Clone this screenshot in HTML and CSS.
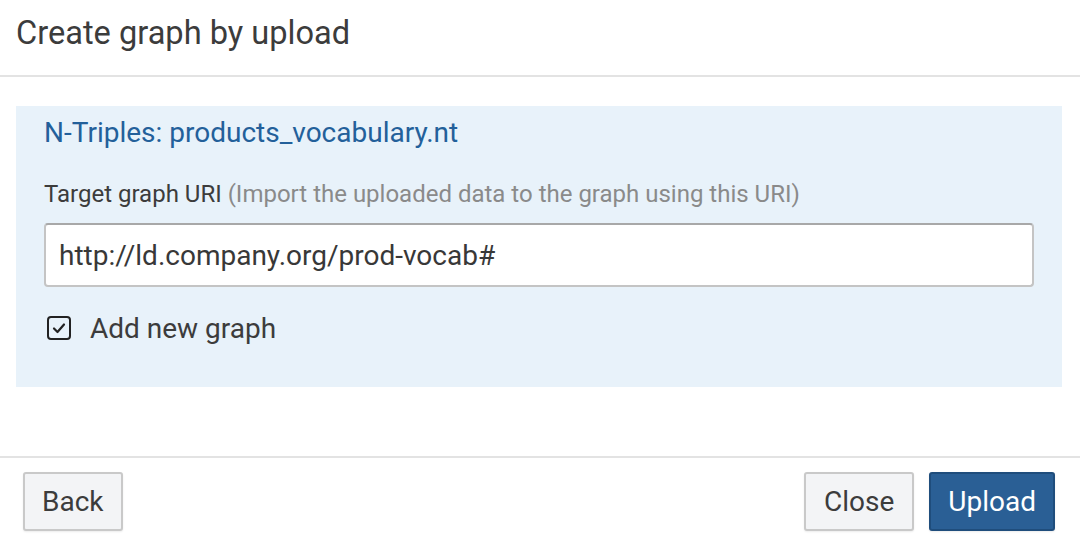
FILE: index.html
```html
<!DOCTYPE html>
<html>
<head>
<meta charset="utf-8">
<link rel="stylesheet" href="styles.css">
</head>
<body>
<div class="modal">
  <div class="modal-header">
    <h1 class="title">Create graph by upload</h1>
  </div>
  <div class="modal-body">
    <div class="panel">
      <div class="file-name">N-Triples: products_vocabulary.nt</div>
      <div class="field-label">Target graph URI <span class="hint">(Import the uploaded data to the graph using this URI)</span></div>
      <div class="input">http://ld.company.org/prod-vocab#</div>
      <div class="check-row">
        <span class="checkbox">
          <svg viewBox="0 0 24 24" width="24" height="24"><rect x="1" y="1" width="22" height="22" rx="3" fill="none" stroke="#222" stroke-width="2"/><path d="M7 12.5 L10.5 16 L17 8.5" fill="none" stroke="#222" stroke-width="2.2" stroke-linecap="round" stroke-linejoin="round"/></svg>
        </span>
        <span class="check-label">Add new graph</span>
      </div>
    </div>
  </div>
  <div class="modal-footer">
    <button class="btn">Back</button>
    <div class="spacer"></div>
    <button class="btn btn-close">Close</button>
    <button class="btn btn-primary">Upload</button>
  </div>
</div>
</body>
</html>
```

FILE: styles.css
```css
html, body {
  margin: 0;
  padding: 0;
  background: #fff;
}
body {
  font-family: Roboto, "Liberation Sans", sans-serif;
  color: #333;
  width: 1080px;
  height: 540px;
  overflow: hidden;
}
.modal {
  display: flex;
  flex-direction: column;
}
.modal-header {
  height: 75px;
  border-bottom: 2px solid #e3e3e3;
  display: flex;
  align-items: center;
  padding: 0 16px;
}
.title {
  margin: 0;
  font-size: 32.6px;
  line-height: 40px;
  font-weight: 400;
  color: #3c3c3c;
  position: relative;
  top: -5px;
}
.modal-body {
  padding: 29px 18px 69px 16px;
}
.panel {
  background: #e8f2fa;
  height: 281px;
  box-sizing: border-box;
  padding: 11px 28px 0 28px;
  display: flex;
  flex-direction: column;
}
.file-name {
  font-size: 28px;
  color: #23609a;
  height: 32px;
  line-height: 32px;
}
.field-label {
  margin-top: 31px;
  font-size: 24px;
  line-height: 28px;
  color: #3c3c3c;
}
.hint {
  color: #8a8a8a;
}
.input {
  margin-top: 15px;
  height: 64px;
  box-sizing: border-box;
  background: #fff;
  border: 2px solid #c4c4c4;
  border-top-color: #a8a8a8;
  border-radius: 4px;
  padding: 0 13px;
  display: flex;
  align-items: center;
  font-size: 28px;
  color: #383838;
}
.check-row {
  margin-top: 29px;
  display: flex;
  align-items: center;
  height: 24px;
  padding-left: 3px;
}
.checkbox {
  width: 24px;
  height: 24px;
  display: inline-flex;
}
.check-label {
  margin-left: 19px;
  font-size: 28px;
  color: #3c3c3c;
}
.modal-footer {
  border-top: 2px solid #e3e3e3;
  display: flex;
  align-items: flex-start;
  padding: 14px 25px 0 23px;
  gap: 15px;
}
.spacer {
  flex: 1;
}
.btn {
  font-family: Roboto, "Liberation Sans", sans-serif;
  font-size: 28px;
  height: 59px;
  padding: 0 17px;
  background: #f3f4f6;
  color: #3c3c3c;
  border: 2px solid #c9c9c9;
  border-radius: 3px;
  box-shadow: 0 1px 2px rgba(0,0,0,0.08);
}
.btn-close {
  padding: 0 18px;
}
.btn-primary {
  background: #2a5f95;
  color: #fff;
  border-color: #1f4d7c;
}
```
